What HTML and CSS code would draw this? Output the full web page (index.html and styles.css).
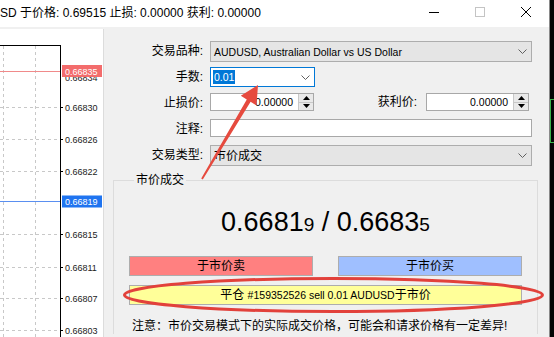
FILE: index.html
```html
<!DOCTYPE html>
<html>
<head>
<meta charset="utf-8">
<link rel="stylesheet" href="styles.css">
</head>
<body>
<div class="screen">
  <div class="window">
    <div class="titlebar">
      <div class="title">SD 于价格: 0.69515 止损: 0.00000 获利: 0.00000</div>
      <div class="ctrls">
        <div class="ctrl"><svg width="10" height="10" viewBox="0 0 10 10"><line x1="0" y1="5.5" x2="10" y2="5.5" stroke="#000" stroke-width="1"/></svg></div>
        <div class="ctrl"><svg width="10" height="10" viewBox="0 0 10 10"><rect x="0.5" y="0.5" width="9" height="9" fill="none" stroke="#c4c4c4" stroke-width="1"/></svg></div>
        <div class="ctrl"><svg width="10" height="10" viewBox="0 0 10 10"><path d="M0 0L10 10M10 0L0 10" stroke="#000" stroke-width="1"/></svg></div>
      </div>
    </div>
    <div class="client">
      <div class="chart">
        <svg width="103" height="308" viewBox="0 29 103 308">
          <g stroke="#c8c8c8" stroke-width="1" stroke-dasharray="3 3">
            <line x1="3.5" y1="46" x2="3.5" y2="337"/>
            <line x1="35.5" y1="46" x2="35.5" y2="337"/>
            <line x1="0" y1="107.5" x2="60" y2="107.5"/>
            <line x1="0" y1="139.5" x2="60" y2="139.5"/>
            <line x1="0" y1="171.5" x2="60" y2="171.5"/>
            <line x1="0" y1="234.5" x2="60" y2="234.5"/>
            <line x1="0" y1="267.5" x2="60" y2="267.5"/>
            <line x1="0" y1="298.5" x2="60" y2="298.5"/>
            <line x1="0" y1="330.5" x2="60" y2="330.5"/>
          </g>
          <g stroke="#000" stroke-width="1">
            <line x1="0" y1="45.5" x2="61" y2="45.5"/>
            <line x1="60.5" y1="45" x2="60.5" y2="337"/>
            <line x1="60" y1="107.5" x2="63" y2="107.5"/>
            <line x1="60" y1="139.5" x2="63" y2="139.5"/>
            <line x1="60" y1="171.5" x2="63" y2="171.5"/>
            <line x1="60" y1="234.5" x2="63" y2="234.5"/>
            <line x1="60" y1="267.5" x2="63" y2="267.5"/>
            <line x1="60" y1="298.5" x2="63" y2="298.5"/>
            <line x1="60" y1="330.5" x2="63" y2="330.5"/>
          </g>
          <line x1="0" y1="71.5" x2="60" y2="71.5" stroke="#f08a8a" stroke-width="1"/>
          <line x1="0" y1="201.5" x2="60" y2="201.5" stroke="#5a8ff0" stroke-width="1"/>
          <g class="axis-lbl">
            <text x="65" y="81">0.66834</text>
            <text x="65" y="111">0.66830</text>
            <text x="65" y="143">0.66826</text>
            <text x="65" y="175">0.66822</text>
            <text x="65" y="238">0.66815</text>
            <text x="65" y="271">0.66811</text>
            <text x="65" y="302">0.66807</text>
            <text x="65" y="334">0.66803</text>
          </g>
          <rect x="62" y="65" width="40" height="12" fill="#f36c6c"/>
          <text class="axis-tag" x="65" y="74.5">0.66835</text>
          <rect x="62" y="195.5" width="40" height="12" fill="#1f74f0"/>
          <text class="axis-tag" x="65" y="205">0.66819</text>
        </svg>
      </div>
      <div class="form">
        <div class="grid">
          <div class="lbl">交易品种:</div>
          <div class="select"><span class="lat">AUDUSD, Australian Dollar vs US Dollar</span><svg class="chev" width="9" height="5" viewBox="0 0 9 5"><path d="M0.5 0.5L4.5 4.5L8.5 0.5" fill="none" stroke="#606060" stroke-width="1"/></svg></div>
          <div class="lbl">手数:</div>
          <div class="cell-top"><div class="combo"><span class="hl lat">0.01</span><svg class="chev" width="9" height="5" viewBox="0 0 9 5"><path d="M0.5 0.5L4.5 4.5L8.5 0.5" fill="none" stroke="#606060" stroke-width="1"/></svg></div></div>
          <div class="lbl">止损价:</div>
          <div class="row3">
            <div class="spin sl"><div class="spin-val lat">0.00000</div><div class="spin-btns"><div class="sb"><svg width="7" height="4" viewBox="0 0 7 4"><path d="M3.5 0L7 4H0Z" fill="#000"/></svg></div><div class="sb"><svg width="7" height="4" viewBox="0 0 7 4"><path d="M0 0H7L3.5 4Z" fill="#000"/></svg></div></div></div>
            <div class="lbl2">获利价:</div>
            <div class="spin tp"><div class="spin-val lat">0.00000</div><div class="spin-btns"><div class="sb"><svg width="7" height="4" viewBox="0 0 7 4"><path d="M3.5 0L7 4H0Z" fill="#000"/></svg></div><div class="sb"><svg width="7" height="4" viewBox="0 0 7 4"><path d="M0 0H7L3.5 4Z" fill="#000"/></svg></div></div></div>
          </div>
          <div class="lbl">注释:</div>
          <div class="cell-top"><div class="textbox"></div></div>
          <div class="lbl">交易类型:</div>
          <div class="select"><span>市价成交</span><svg class="chev" width="9" height="5" viewBox="0 0 9 5"><path d="M0.5 0.5L4.5 4.5L8.5 0.5" fill="none" stroke="#606060" stroke-width="1"/></svg></div>
        </div>
        <fieldset class="group">
          <legend>市价成交</legend>
          <div class="price">0.6681<span class="small">9</span> / 0.6683<span class="small">5</span></div>
          <div class="btns">
            <button class="btn sell">于市价卖</button>
            <button class="btn buy">于市价买</button>
          </div>
          <button class="btn close">平仓 <span class="lat">#159352526 sell 0.01 AUDUSD</span>于市价</button>
          <p class="note">注意：市价交易模式下的实际成交价格，可能会和请求价格有一定差异!</p>
        </fieldset>
      </div>
    </div>
  </div>
  <div class="edge"><div class="edge-box"></div></div>
</div>
<svg class="annot" width="554" height="337" viewBox="0 0 554 337">
  <ellipse cx="333.5" cy="295" rx="209" ry="16.5" fill="none" stroke="#e2413b" stroke-width="3"/>
  <polygon points="258,85 256.5,105.5 250.6,101.8 202.8,179.6 201.2,178.6 246.8,99.4 240.8,95.8" fill="#e64a3e"/>
</svg>
</body>
</html>
```

FILE: styles.css
```css
* { box-sizing: border-box; }
html, body { margin: 0; padding: 0; }
body {
  width: 554px;
  height: 337px;
  overflow: hidden;
  position: relative;
  background: #000;
  font-family: "Liberation Sans", "Noto Sans CJK SC", sans-serif;
  font-size: 12px;
  line-height: 14px;
  color: #000;
}
.screen { display: flex; width: 554px; height: 337px; }
.window { width: 549px; height: 337px; display: flex; flex-direction: column; background: #f0f0f0; }
.edge { width: 5px; background: #050505; padding-top: 99px; border-left: 1px solid #8a8a8a; }
.edge-box { height: 44px; border: 1px solid #3cb44b; border-right: none; }

.titlebar { height: 27px; background: #fff; display: flex; align-items: center; justify-content: space-between; }
.title { padding-left: 0; padding-bottom: 1px; white-space: nowrap; }
.ctrls { display: flex; height: 27px; }
.ctrl { width: 46px; height: 27px; display: flex; align-items: center; justify-content: center; padding-bottom: 3px; }
.ctrl svg { display: block; }

.client { flex: 1; display: flex; padding-top: 2px; }
.chart { width: 104px; background: #fff; border-right: 1px solid #dcdcdc; overflow: hidden; }
.chart svg { display: block; }
.axis-lbl text { font-family: "Liberation Sans", sans-serif; font-size: 9px; fill: #222; }
.axis-tag { font-family: "Liberation Sans", sans-serif; font-size: 9px; fill: #fff; }

.form { flex: 1; padding-top: 12px; }
.grid {
  display: grid;
  grid-template-columns: 99px 322px;
  grid-template-rows: repeat(5, 21px);
  column-gap: 7px;
  row-gap: 5px;
}
.lbl { text-align: right; display: flex; align-items: center; justify-content: flex-end; white-space: nowrap; padding-bottom: 1px; }
.lat { font-size: 10.5px; }
.select {
  height: 21px;
  background: #e5e5e5;
  border: 1px solid #adadad;
  display: flex;
  align-items: center;
  justify-content: space-between;
  padding: 0 4px 0 3px;
}
.chev { display: block; }
.cell-top { display: flex; align-items: flex-start; }
.combo {
  width: 105px;
  height: 20px;
  background: #fff;
  border: 1px solid #0078d7;
  display: flex;
  align-items: center;
  justify-content: space-between;
  padding: 0 4px 0 2px;
}
.hl { background: #0078d7; color: #fff; padding: 0 1px; line-height: 14px; }
.row3 { display: flex; align-items: flex-start; }
.spin { display: flex; height: 18px; border: 1px solid #a8a8a8; background: #fff; }
.spin.sl { width: 104px; }
.spin.tp { width: 103px; margin-right: 3px; }
.spin-val { flex: 1; text-align: right; padding-right: 5px; line-height: 16px; }
.spin-btns { width: 15px; display: flex; flex-direction: column; border-left: 1px solid #c8c8c8; background: #e9e9e9; }
.sb { flex: 1; display: flex; align-items: center; justify-content: center; }
.sb + .sb { border-top: 1px solid #c8c8c8; }
.sb svg { display: block; }
.lbl2 { margin-left: auto; margin-right: 9px; line-height: 18px; white-space: nowrap; }
.textbox { width: 322px; height: 18px; background: #fff; border: 1px solid #a8a8a8; }

.group {
  margin: 7px 0 0 9px;
  width: 425px;
  border: 1px solid #dcdcdc;
  border-bottom: none;
  padding: 0 15px 0 15px;
  min-width: 0;
}
.group legend { padding: 0 2px; margin-left: 5px; line-height: 14px; }
.price {
  margin-top: 18px;
  height: 34px;
  line-height: 34px;
  text-align: center;
  font-size: 27px;
  color: #000;
  white-space: nowrap;
}
.price .small { font-size: 19px; }
.btns { display: flex; gap: 25px; margin-top: 17px; }
.btn {
  font: inherit;
  color: #000;
  height: 20px;
  border: 1px solid #adadad;
  padding: 0;
  margin: 0;
  display: block;
  text-align: center;
  line-height: 18px;
}
.sell { width: 184px; background: #ff8080; }
.buy { width: 184px; background: #9fbfff; }
.close { width: 393px; background: #ffff99; margin-top: 9px; }
.note { margin: 13px 0 0 3px; line-height: 16px; white-space: nowrap; }

.annot { position: absolute; left: 0; top: 0; pointer-events: none; }
```
